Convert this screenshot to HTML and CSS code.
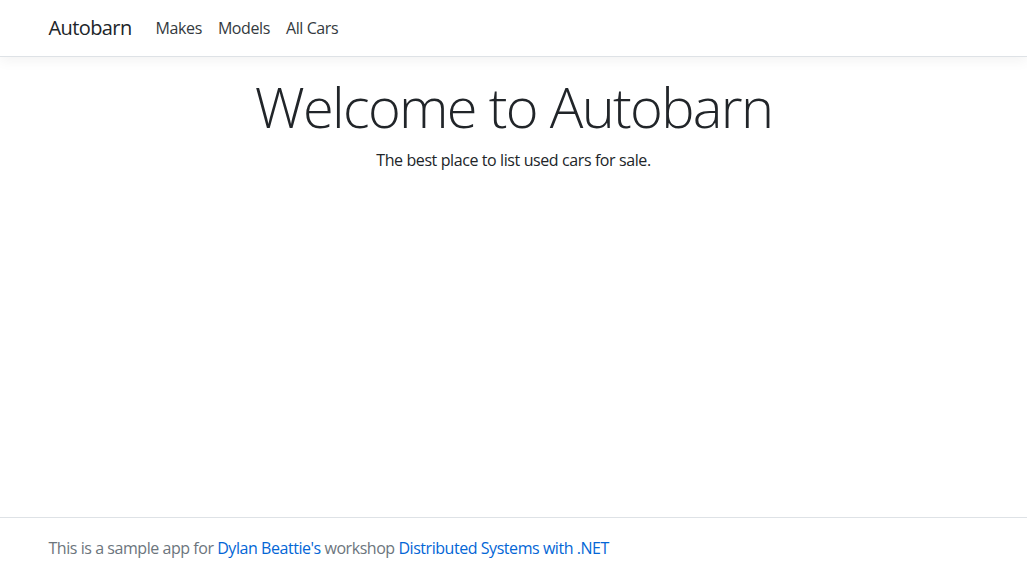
FILE: index.html
```html
<!DOCTYPE html>
<html lang="en">
<head>
<meta charset="utf-8">
<title>Autobarn</title>
<link rel="stylesheet" href="styles.css">
</head>
<body>
<header class="site-header">
  <nav class="navbar">
    <div class="container nav-inner">
      <a class="brand" href="#">Autobarn</a>
      <ul class="nav-links">
        <li><a href="#">Makes</a></li>
        <li><a href="#">Models</a></li>
        <li><a href="#">All Cars</a></li>
      </ul>
    </div>
  </nav>
</header>
<main class="container main">
  <div class="hero">
    <h1 class="display">Welcome to Autobarn</h1>
    <p class="lead-text">The best place to list used cars for sale.</p>
  </div>
</main>
<footer class="footer">
  <div class="container">
    This is a sample app for <a href="#">Dylan Beattie's</a> workshop <a href="#">Distributed Systems with .NET</a>
  </div>
</footer>
</body>
</html>
```

FILE: styles.css
```css
* { box-sizing: border-box; }
html, body { height: 100%; }
body {
  margin: 0;
  font-family: "Open Sans", "Noto Sans", sans-serif;
  font-size: 16px;
  line-height: 1.5;
  color: #212529;
  background: #fff;
  display: flex;
  flex-direction: column;
  letter-spacing: -0.4px;
}
a { text-decoration: none; }
.container {
  width: 100%;
  max-width: 960px;
  padding: 0 15px;
  margin: 0 auto;
}
.navbar {
  padding: 8px 16px;
  border-bottom: 1px solid #dee2e6;
  box-shadow: 0 .25rem .75rem rgba(0,0,0,.05);
  margin-bottom: 16px;
  background: #fff;
}
.nav-inner {
  display: flex;
  align-items: center;
}
.brand {
  font-size: 20px;
  line-height: 30px;
  padding: 5px 0;
  margin-right: 16px;
  color: #212529;
  letter-spacing: -0.6px;
}
.nav-links {
  display: flex;
  list-style: none;
  margin: 0;
  padding: 0;
}
.nav-links a {
  display: block;
  padding: 8px;
  color: #343a40;
}
.main { flex: 1; }
.hero { text-align: center; }
.display {
  font-size: 56px;
  font-weight: 300;
  line-height: 1.2;
  margin: 0 0 8px;
  letter-spacing: -1.7px;
}
.lead-text { margin: 0 0 16px; }
.footer {
  border-top: 1px solid #dee2e6;
  line-height: 60px;
  color: #6c757d;
  white-space: nowrap;
  letter-spacing: -0.45px;
}
.footer a { color: #0366d6; }
```
